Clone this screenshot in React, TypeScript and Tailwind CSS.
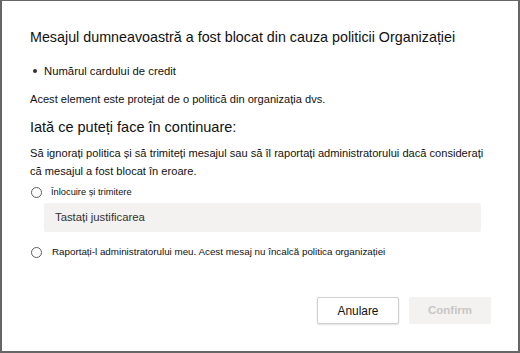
import React from "react";

function Radio() {
  return (
    <span className="block w-[11px] h-[11px] rounded-full border border-[#605e5c] bg-white shrink-0" />
  );
}

export default function App() {
  return (
    <div
      className="w-[520px] h-[353px] bg-white border-t border-x-2 border-b-2 border-[#666666] text-[#111111] flex flex-col"
      style={{ fontFamily: '"Liberation Sans", Arial, sans-serif' }}
    >
      <div className="pl-[28px] pr-[27px] pt-[26px] flex flex-col">
        <h1 className="text-[14.3px] leading-[20px] font-normal">
          Mesajul dumneavoastră a fost blocat din cauza politicii Organizației
        </h1>
        <ul className="mt-[16px] text-[11.3px] leading-[16px]">
          <li className="flex items-center">
            <span className="inline-block w-[4px] h-[4px] rounded-full bg-[#323130] ml-[3px] mr-[7px]" />
            Numărul cardului de credit
          </li>
        </ul>
        <p className="mt-[12px] text-[11.1px] leading-[16px]">
          Acest element este protejat de o politică din organizația dvs.
        </p>
        <h2 className="mt-[10px] text-[14.5px] leading-[20px] font-normal">
          Iată ce puteți face în continuare:
        </h2>
        <p className="mt-[7px] text-[11.1px] leading-[18px]">
          Să ignorați politica și să trimiteți mesajul sau să îl raportați administratorului dacă considerați
          <br />
          că mesajul a fost blocat în eroare.
        </p>
        <label className="mt-[5px] h-[14px] flex items-center pl-[1px]">
          <Radio />
          <span className="ml-[9px] text-[9.3px] leading-[14px]">Înlocuire și trimitere</span>
        </label>
        <div className="mt-[4px] ml-[14px] w-[437px] h-[29px] bg-[#f3f2f1] rounded-[2px] flex items-center pl-[11px] text-[11.3px] text-[#323130]">
          Tastați justificarea
        </div>
        <label className="mt-[13px] h-[14px] flex items-center pl-[1px]">
          <Radio />
          <span className="ml-[10px] text-[9.8px] leading-[14px]">
            Raportați-l administratorului meu. Acest mesaj nu încalcă politica organizației
          </span>
        </label>
        <div className="mt-[38px] flex justify-end gap-[10px]">
          <button className="w-[82px] h-[27px] bg-white border border-[#d2d0ce] rounded-[2px] shadow-[0_1px_2px_rgba(0,0,0,0.12)] text-[11.9px] text-[#111111] pt-[2px]">
            Anulare
          </button>
          <button className="w-[82px] h-[27px] bg-[#f3f2f1] rounded-[2px] text-[11.5px] font-semibold text-[#c8c6c4]">
            Confirm
          </button>
        </div>
      </div>
    </div>
  );
}
